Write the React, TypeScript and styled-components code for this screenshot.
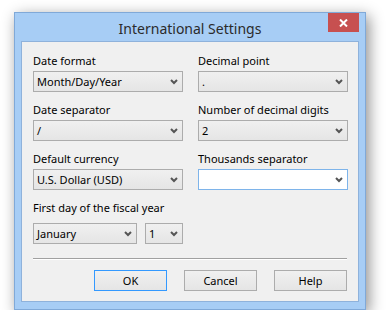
import * as React from 'react';
import styled, { createGlobalStyle } from 'styled-components';

const GlobalStyle = createGlobalStyle`
  html, body {
    margin: 0;
    padding: 0;
    background: #ffffff;
  }
  body {
    font-family: 'Noto Sans', 'Liberation Sans', sans-serif;
    font-size: 11px;
    color: #000;
  }
`;

const Stage = styled.div`
  padding: 12px 0 0 14px;
`;

const Window = styled.div`
  width: 352px;
  box-sizing: border-box;
  background: #a7cdf5;
  border: 1px solid #80a9d8;
  padding: 0 6px 7px 6px;
  box-shadow: 3px 4px 14px rgba(0, 0, 0, 0.45);
`;

const TitleBar = styled.div`
  height: 28px;
  display: grid;
  grid-template-columns: 1fr auto 1fr;
  align-items: start;
`;

const Title = styled.div`
  grid-column: 2;
  align-self: center;
  font-size: 14px;
  color: #2b2b2b;
  padding-top: 2px;
`;

const CloseButton = styled.div`
  grid-column: 3;
  justify-self: end;
  width: 31px;
  height: 19px;
  background: #c75050;
  display: flex;
  align-items: center;
  justify-content: center;
`;

const Client = styled.div`
  background: #f0f0f0;
  border: 1px solid #8fb2db;
  padding: 11px 10px 10px 11px;
`;

const FieldGrid = styled.div`
  display: grid;
  grid-template-columns: 150px 150px;
  column-gap: 15px;
  row-gap: 10px;
`;

const Field = styled.div`
  display: flex;
  flex-direction: column;
`;

const Label = styled.div<{ $gap?: number }>`
  height: 16px;
  line-height: 16px;
  margin-bottom: ${p => p.$gap ?? 2}px;
  color: #000;
  white-space: nowrap;
`;

const Combo = styled.div<{ $width?: number; $focused?: boolean }>`
  box-sizing: border-box;
  width: ${p => (p.$width ? `${p.$width}px` : '100%')};
  height: 21px;
  border: 1px solid ${p => (p.$focused ? '#7eb4ea' : '#acacac')};
  background: ${p => (p.$focused ? '#ffffff' : 'linear-gradient(#f0f0f0, #e5e5e5)')};
  display: flex;
  align-items: center;
  justify-content: space-between;
  padding: 0 4px 0 3px;
  color: #000;
`;

const Row = styled.div`
  display: flex;
  gap: 8px;
`;

const Separator = styled.div`
  margin: 14px 0 0 0;
  width: 314px;
  border-top: 1px solid #a0a0a0;
  border-bottom: 1px solid #ffffff;
`;

const ButtonRow = styled.div`
  display: flex;
  justify-content: flex-end;
  gap: 17px;
  margin: 10px 1px 0 0;
`;

const Button = styled.div<{ $default?: boolean }>`
  box-sizing: border-box;
  width: 73px;
  height: 21px;
  border: 1px solid ${p => (p.$default ? '#3399ff' : '#acacac')};
  background: linear-gradient(#f0f0f0, #e5e5e5);
  display: flex;
  align-items: center;
  justify-content: center;
  color: #000;
`;

const Chevron = () => (
  <svg width="8" height="6" viewBox="0 0 8 6">
    <polyline points="1,1 4,4 7,1" fill="none" stroke="#555" strokeWidth="2" />
  </svg>
);

const Select: React.FC<{ value: string; width?: number; focused?: boolean }> = ({ value, width, focused }) => (
  <Combo $width={width} $focused={focused}>
    <span>{value}</span>
    <Chevron />
  </Combo>
);

export default function App() {
  return (
    <Stage>
      <GlobalStyle />
      <Window>
        <TitleBar>
          <Title>International Settings</Title>
          <CloseButton>
            <svg width="9" height="8" viewBox="0 0 9 8">
              <path d="M1 0.5 L8 7.5 M8 0.5 L1 7.5" stroke="#fff" strokeWidth="2" />
            </svg>
          </CloseButton>
        </TitleBar>
        <Client>
          <FieldGrid>
            <Field>
              <Label>Date format</Label>
              <Select value="Month/Day/Year" />
            </Field>
            <Field>
              <Label>Decimal point</Label>
              <Select value="." />
            </Field>
            <Field>
              <Label>Date separator</Label>
              <Select value="/" />
            </Field>
            <Field>
              <Label>Number of decimal digits</Label>
              <Select value="2" />
            </Field>
            <Field>
              <Label>Default currency</Label>
              <Select value="U.S. Dollar (USD)" />
            </Field>
            <Field>
              <Label>Thousands separator</Label>
              <Select value="" focused />
            </Field>
            <Field>
              <Label $gap={7}>First day of the fiscal year</Label>
              <Row>
                <Select value="January" width={104} />
                <Select value="1" width={38} />
              </Row>
            </Field>
          </FieldGrid>
          <Separator />
          <ButtonRow>
            <Button $default>OK</Button>
            <Button>Cancel</Button>
            <Button>Help</Button>
          </ButtonRow>
        </Client>
      </Window>
    </Stage>
  );
}
